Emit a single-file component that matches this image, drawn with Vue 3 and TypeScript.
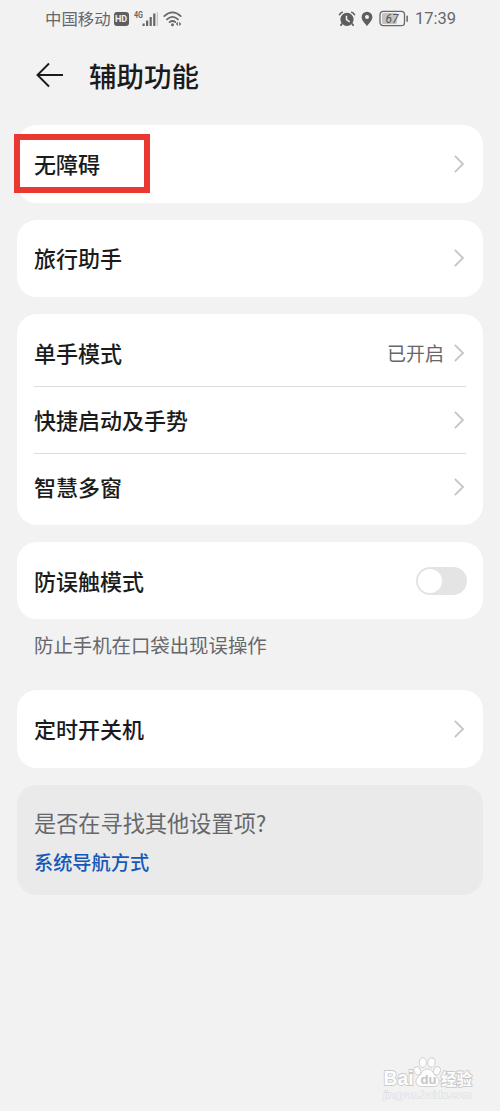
<script setup lang="ts">
interface Item {
  label: string
  value?: string
  toggle?: boolean
  marked?: boolean
}
interface Group {
  items: Item[]
  note?: string
}

const groups: Group[] = [
  { items: [{ label: '无障碍', marked: true }] },
  { items: [{ label: '旅行助手' }] },
  {
    items: [
      { label: '单手模式', value: '已开启' },
      { label: '快捷启动及手势' },
      { label: '智慧多窗' },
    ],
  },
  { items: [{ label: '防误触模式', toggle: true }], note: '防止手机在口袋出现误操作' },
  { items: [{ label: '定时开关机' }] },
]
</script>

<template>
  <div class="screen">
    <header class="status">
      <div class="status-left">
        <span class="carrier">中国移动</span>
        <span class="hd">HD</span>
        <svg class="signal" width="28" height="18" viewBox="0 0 28 18">
          <text x="0" y="8" class="net" textLength="9" lengthAdjust="spacingAndGlyphs">4G</text>
          <g fill="#66676a">
            <rect x="8.5" y="13.5" width="2.2" height="2.5" />
            <rect x="12" y="10.5" width="2.2" height="5.5" />
            <rect x="15.6" y="7" width="2.2" height="9" />
            <rect x="19.2" y="3.5" width="2.2" height="12.5" />
            <rect x="22.8" y="2" width="1" height="14" opacity=".35" />
          </g>
        </svg>
        <svg class="wifi" width="20" height="18" viewBox="0 0 20 18">
          <g fill="none" stroke="#66676a" stroke-width="1.8" stroke-linecap="round">
            <path d="M1.3 6.1Q9.5-1.3 17.7 6.1" />
            <path d="M4 9.3Q9.5 4.4 15 9.3" />
            <path d="M6.6 12.1Q9.5 9.8 12.4 12.1" />
          </g>
          <circle cx="9.5" cy="14.8" r="1.5" fill="#66676a" />
          <path d="M15 11.7l-2.1 2.2 2.1 2.2zM16.2 11.7l2.1 2.2-2.1 2.2z" fill="#66676a" />
        </svg>
      </div>
      <div class="status-right">
        <svg width="18" height="18" viewBox="0 0 18 18">
          <path d="M4 13.5l-1.5 2.3M14 13.5l1.5 2.3" stroke="#5d5e60" stroke-width="1.8" />
          <circle cx="9" cy="9.3" r="6.6" fill="#5d5e60" />
          <path d="M1.2 5.2Q2.1 2.8 4.8 2M16.8 5.2Q15.9 2.8 13.2 2" fill="none" stroke="#5d5e60" stroke-width="1.6" />
          <path d="M8.5 5.7v4l3.2 2.2" fill="none" stroke="#f1f2f4" stroke-width="1.5" />
        </svg>
        <svg class="pin" width="12" height="16" viewBox="0 0 12 16">
          <path
            d="M6 .7a5.4 5.4 0 0 0-5.4 5.4C.6 9.5 4 12.5 6 15.2 8 12.5 11.4 9.5 11.4 6.1A5.4 5.4 0 0 0 6 .7zM6 4a2 2 0 1 1 0 4 2 2 0 0 1 0-4z"
            fill="#5d5e60" fill-rule="evenodd"
          />
        </svg>
        <svg class="battery" width="30" height="17" viewBox="0 0 30 17">
          <rect x="3" y="3" width="15" height="11" rx="1.5" fill="#c2c3c5" />
          <rect x="1" y="1.3" width="24.5" height="14.4" rx="3.2" fill="none" stroke="#66676a" stroke-width="1.3" />
          <rect x="27.4" y="5.4" width="1.5" height="6.4" rx=".6" fill="#66676a" />
          <text x="13" y="12.8" text-anchor="middle" class="level">67</text>
        </svg>
        <span class="time">17:39</span>
      </div>
    </header>

    <div class="title-bar">
      <svg width="28" height="26" viewBox="0 0 28 26">
        <path d="M13 1.5L1.5 13 13 24.5M1.5 13H27" fill="none" stroke="#1b1b1c" stroke-width="1.9" />
      </svg>
      <h1>辅助功能</h1>
    </div>

    <main>
      <section v-for="(group, g) in groups" :key="g" class="group">
        <div class="card">
          <div v-for="item in group.items" :key="item.label" class="row">
            <span class="label">{{ item.label }}</span>
            <span v-if="item.value" class="value">{{ item.value }}</span>
            <span v-if="item.toggle" class="switch"><i></i></span>
            <svg v-else class="chevron" width="12" height="20" viewBox="0 0 12 20">
              <path d="M1.8 1.8L10 10 1.8 18.2" fill="none" stroke="#c5c5c6" stroke-width="1.8" />
            </svg>
            <span v-if="item.marked" class="mark"></span>
          </div>
        </div>
        <p v-if="group.note" class="note">{{ group.note }}</p>
      </section>

      <section class="more">
        <p class="question">是否在寻找其他设置项?</p>
        <a class="link">系统导航方式</a>
      </section>
    </main>

    <svg class="watermark" width="94" height="46" viewBox="0 0 94 46">
      <g fill="#fdfdfd" stroke="#d0d0d1" stroke-width="1">
        <path d="M45.5 14C40.5 14 40 18.5 36.5 21.5 32.5 25 33 31.5 39.5 31.5H51.5C58 31.5 58.5 25 54.5 21.5 51 18.5 50.5 14 45.5 14Z" />
        <ellipse cx="35.3" cy="15.7" rx="3.3" ry="4.3" transform="rotate(-20 35.3 15.7)" />
        <ellipse cx="40.8" cy="7.5" rx="3.6" ry="4.8" />
        <ellipse cx="49.5" cy="7.5" rx="3.6" ry="4.8" transform="rotate(8 49.5 7.5)" />
        <ellipse cx="55" cy="15.7" rx="3.3" ry="4.3" transform="rotate(20 55 15.7)" />
      </g>
      <g class="brand">
        <text x="1.5" y="30" textLength="30" lengthAdjust="spacingAndGlyphs">Bai</text>
        <text x="59" y="30" class="cn" textLength="31">经验</text>
      </g>
      <text x="38.5" y="29" class="du">du</text>
      <text x="1.5" y="42.5" class="url" textLength="88" lengthAdjust="spacingAndGlyphs">jingyan.baidu.com</text>
    </svg>
  </div>
</template>

<style>
body {
  margin: 0;
  background: #f2f2f3;
}
</style>

<style scoped>
.screen {
  position: relative;
  width: 500px;
  height: 1111px;
  overflow: hidden;
  background: #f2f2f3;
  color: #1b1b1c;
  font-family: "Noto Sans CJK SC", "Noto Sans", sans-serif;
}
.status {
  display: flex;
  justify-content: space-between;
  height: 37px;
  padding: 0 44px 0 45px;
  box-sizing: border-box;
  color: #66676a;
}
.status-left,
.status-right {
  display: flex;
  align-items: center;
}
.carrier {
  font-size: 16.4px;
  line-height: 37px;
}
.hd {
  width: 15px;
  height: 14px;
  margin-left: 3px;
  border-radius: 3px;
  background: #5d5e60;
  color: #f1f2f4;
  font: bold 9px/14px Roboto, sans-serif;
  text-align: center;
}
.signal {
  margin-left: 5px;
}
.net {
  font: bold 8.5px Roboto, sans-serif;
  fill: #66676a;
}
.wifi {
  margin-left: 1px;
}
.pin {
  margin-left: 5px;
}
.battery {
  margin-left: 6px;
}
.level {
  font: italic 12px Roboto, sans-serif;
  fill: #555658;
}
.time {
  width: 41px;
  margin-left: 6px;
  font: 16.5px/37px Roboto, sans-serif;
  white-space: nowrap;
}
.title-bar {
  display: flex;
  align-items: center;
  gap: 25px;
  height: 76px;
  padding-left: 36px;
}
h1 {
  margin: 0;
  font-size: 27.5px;
  line-height: 40px;
  font-weight: 500;
}
main {
  display: flex;
  flex-direction: column;
  gap: 17px;
  padding: 12px 17px 0;
}
.card {
  padding: 5.5px 17px;
  border-radius: 20px;
  background: #fff;
}
.row {
  position: relative;
  display: flex;
  align-items: center;
  height: 66.5px;
}
.row + .row {
  border-top: 1px solid #dcdcdd;
  height: 65.7px;
}
.label {
  flex: 1;
  padding-bottom: 1.8px;
  font-size: 22px;
  line-height: 32px;
  font-weight: 500;
}
.value {
  margin-right: 9px;
  color: #66676a;
  font-size: 19px;
}
.chevron {
  margin-right: 1px;
}
.switch {
  width: 51px;
  height: 28px;
  margin-right: -1px;
  border-radius: 14px;
  background: #e4e4e5;
}
.switch i {
  display: block;
  width: 24px;
  height: 24px;
  margin: 2px;
  border-radius: 50%;
  background: #fff;
}
.mark {
  position: absolute;
  left: -20px;
  top: 3px;
  width: 124px;
  height: 47px;
  border: 6px solid #e93831;
}
.note {
  height: 54px;
  margin: 0;
  padding-left: 17px;
  color: #66676a;
  font-size: 19.4px;
  line-height: 51px;
}
.more {
  height: 110px;
  padding: 20px 17px 0;
  box-sizing: border-box;
  border-radius: 20px;
  background: #eaeaeb;
}
.question {
  margin: 0;
  color: #66676a;
  font-size: 22.2px;
  line-height: 34px;
}
.link {
  display: block;
  margin-top: 8px;
  color: #1459b8;
  font-size: 19.2px;
  line-height: 30px;
  font-weight: 500;
}
.watermark {
  position: absolute;
  left: 382px;
  top: 1055px;
}
.brand text {
  fill: #fdfdfd;
  stroke: #cacacb;
  stroke-width: 1.8px;
  paint-order: stroke;
  font: bold 20px "Liberation Sans", sans-serif;
}
.brand .cn {
  font: bold 15.5px "Noto Sans CJK SC", sans-serif;
}
.du {
  fill: #c6c6c7;
  font: bold 13px "Liberation Sans", sans-serif;
}
.url {
  fill: #fafafa;
  stroke: #dadadb;
  stroke-width: 1px;
  paint-order: stroke;
  font: 9.5px "Liberation Sans", sans-serif;
}
</style>
